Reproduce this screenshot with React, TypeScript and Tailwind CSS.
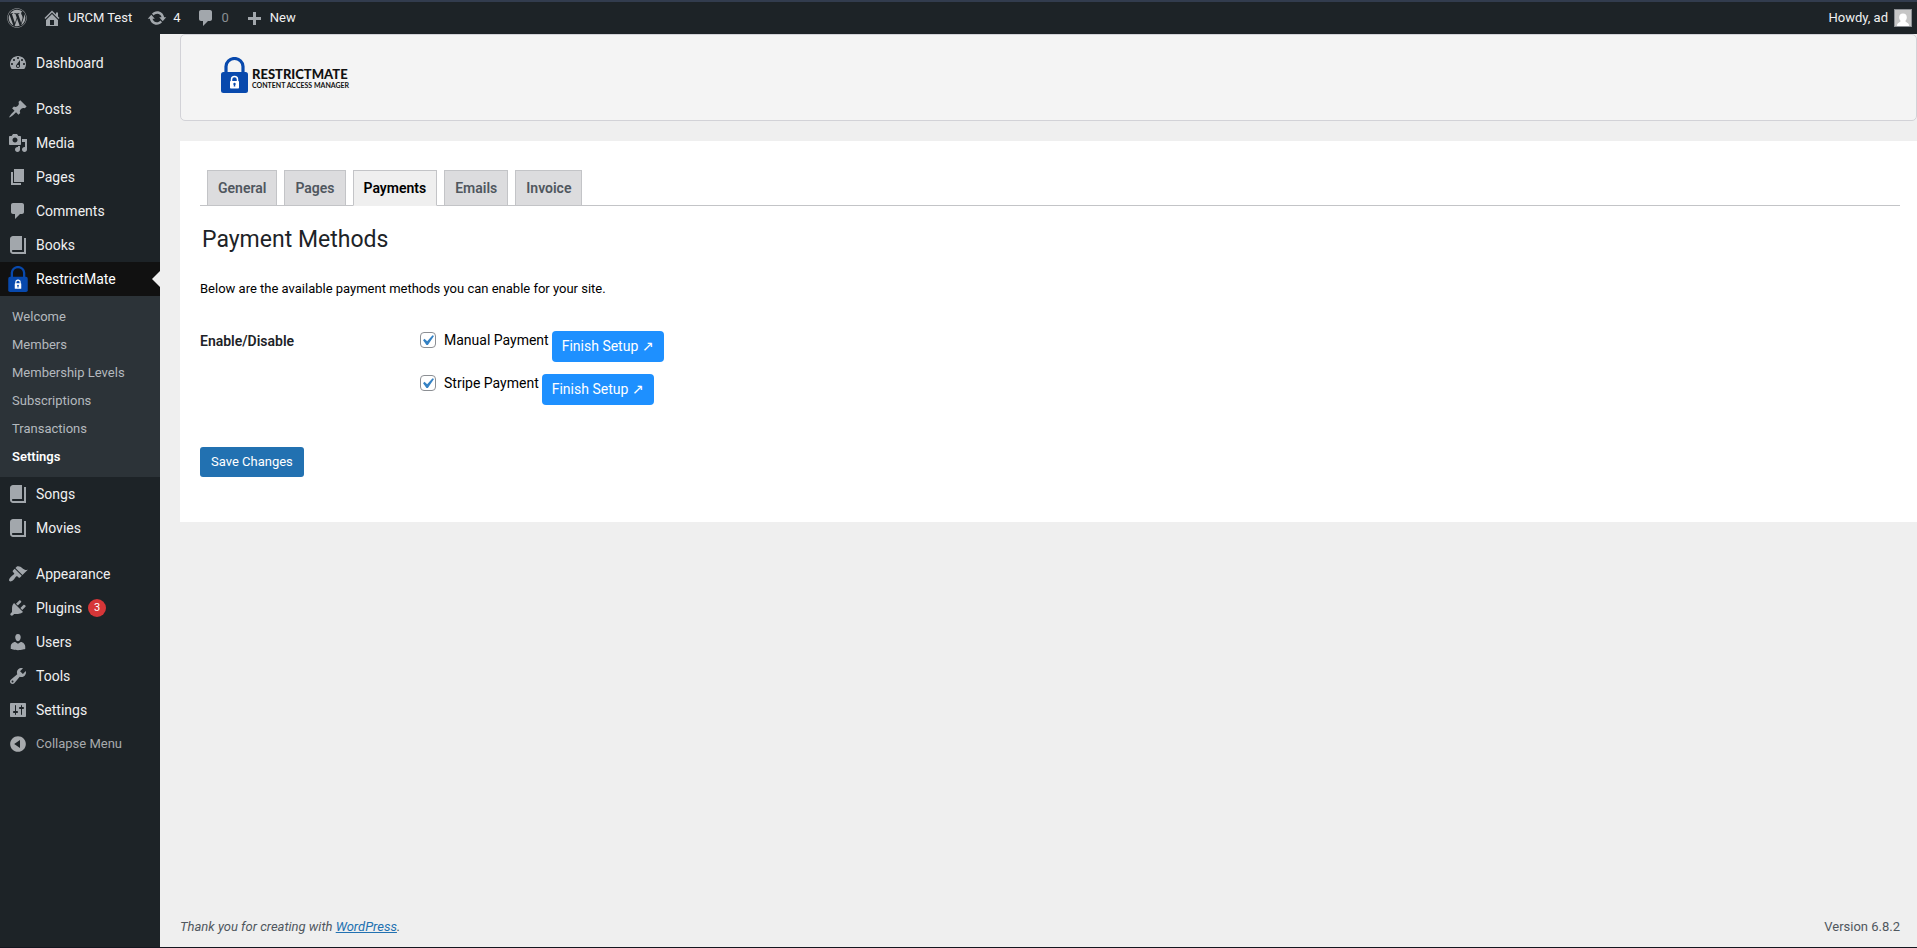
import React from 'react';
import { FaWordpress } from 'react-icons/fa6';

const paths = {
  dashboard:
    'M3.76 16h12.48c1.1-1.37 1.76-3.11 1.76-5 0-4.42-3.58-8-8-8s-8 3.58-8 8c0 1.89.66 3.63 1.76 5zM10 4c.55 0 1 .45 1 1s-.45 1-1 1-1-.45-1-1 .45-1 1-1zM6 6c.55 0 1 .45 1 1s-.45 1-1 1-1-.45-1-1 .45-1 1-1zm8 0c.55 0 1 .45 1 1s-.45 1-1 1-1-.45-1-1 .45-1 1-1zm-5.37 5.55L12 7v6c0 1.1-.9 2-2 2s-2-.9-2-2c0-.57.24-1.08.63-1.45zM4 10c.55 0 1 .45 1 1s-.45 1-1 1-1-.45-1-1 .45-1 1-1zm12 0c.55 0 1 .45 1 1s-.45 1-1 1-1-.45-1-1 .45-1 1-1zm-5 3c0-.55-.45-1-1-1s-1 .45-1 1 .45 1 1 1 1-.45 1-1z',
  post: 'M10.44 3.02l1.82-1.82 6.36 6.35-1.83 1.82c-1.05-.68-2.48-.57-3.41.36l-.75.75c-.92.93-1.04 2.35-.35 3.41l-1.83 1.82-2.41-2.41-2.8 2.79c-.42.42-3.38 2.71-3.8 2.29s1.86-3.39 2.28-3.81l2.79-2.79L4.1 9.36l1.83-1.82c1.05.69 2.48.57 3.4-.36l.75-.75c.93-.92 1.05-2.35.36-3.41z',
  media:
    'M13 11V4c0-.55-.45-1-1-1h-1.67L9 1H5L3.67 3H2c-.55 0-1 .45-1 1v7c0 .55.45 1 1 1h10c.55 0 1-.45 1-1zM7 4.5c1.38 0 2.5 1.12 2.5 2.5S8.38 9.5 7 9.5 4.5 8.38 4.5 7 5.62 4.5 7 4.5zM14 6h5v10.5c0 1.38-1.12 2.5-2.5 2.5S14 17.88 14 16.5s1.12-2.5 2.5-2.5c.17 0 .34.02.5.05V9h-3V6zm-4 8.05V13h2v3.5c0 1.38-1.12 2.5-2.5 2.5S7 17.88 7 16.5 8.12 14 9.5 14c.17 0 .34.02.5.05z',
  page: 'M6 15V2h10v13H6zm-1 1h8v2H3V5h2v11z',
  comments: 'M5 2h9c1.1 0 2 .9 2 2v7c0 1.1-.9 2-2 2h-2l-5 5v-5H5c-1.1 0-2-.9-2-2V4c0-1.1.9-2 2-2z',
  book: 'M16 3h2v16H5c-1.66 0-3-1.34-3-3V4c0-1.66 1.34-3 3-3h9v14H5c-.55 0-1 .45-1 1s.45 1 1 1h11V3z',
  appearance:
    'M14.48 11.06L7.41 3.99l1.5-1.5c.5-.56 2.3-.47 3.51.32 1.21.8 1.43 1.28 2.91 2.1 1.18.64 2.45 1.26 4.45.85zm-.71.71L6.7 4.7 4.93 6.47c-.39.39-.39 1.02 0 1.41l1.06 1.06c.39.39.39 1.03 0 1.42-.6.6-1.43 1.11-2.21 1.69-.35.26-.7.53-1.01.84C1.43 14.23.4 16.08 1.4 17.07c.99 1 2.84-.03 4.18-1.36.31-.31.58-.66.85-1.02.57-.78 1.08-1.61 1.69-2.21.39-.39 1.02-.39 1.41 0l1.06 1.06c.39.39 1.02.39 1.41 0z',
  plugins:
    'M13.11 4.36L9.87 7.6 8 5.73l3.24-3.24c.35-.34 1.05-.2 1.56.32.52.51.66 1.21.31 1.55zm-8 1.77l.91-1.12 9.01 9.01-1.19.84c-.71.71-2.63 1.16-3.82 1.16H6.14L4.9 17.26c-.59.59-1.54.59-2.12 0-.59-.58-.59-1.53 0-2.12l1.24-1.24v-3.88c0-1.13.4-3.19 1.09-3.89zm7.26 3.97l3.24-3.24c.34-.35 1.04-.21 1.55.31.52.51.66 1.21.31 1.55l-3.24 3.25z',
  users:
    'M10 9.25c-2.27 0-2.73-3.44-2.73-3.44C7 4.02 7.82 2 9.97 2c2.16 0 2.98 2.02 2.71 3.81 0 0-.41 3.44-2.68 3.44zm0 2.57L12.72 10c2.39 0 4.52 2.33 4.52 4.53v2.49s-3.65 1.13-7.24 1.13c-3.65 0-7.24-1.13-7.24-1.13v-2.49c0-2.25 1.94-4.48 4.47-4.48z',
  tools:
    'M16.68 9.77c-1.34 1.34-3.3 1.67-4.95.99l-5.41 6.52c-.99.99-2.59.99-3.58 0s-.99-2.59 0-3.57l6.52-5.42c-.68-1.65-.35-3.61.99-4.95 1.28-1.28 3.12-1.62 4.72-1.06l-2.89 2.89 2.82 2.82 2.86-2.87c.53 1.58.18 3.39-1.08 4.65zM3.81 16.21c.4.39 1.04.39 1.43 0 .4-.4.4-1.04 0-1.43-.39-.4-1.03-.4-1.43 0-.39.39-.39 1.03 0 1.43z',
  settings:
    'M18 16V4c0-.55-.45-1-1-1H3c-.55 0-1 .45-1 1v12c0 .55.45 1 1 1h14c.55 0 1-.45 1-1zM8 11h1c.55 0 1 .45 1 1s-.45 1-1 1H8v1.5c0 .28-.22.5-.5.5s-.5-.22-.5-.5V13H6c-.55 0-1-.45-1-1s.45-1 1-1h1V5.5c0-.28.22-.5.5-.5s.5.22.5.5V11zm5-2h-1c-.55 0-1-.45-1-1s.45-1 1-1h1V5.5c0-.28.22-.5.5-.5s.5.22.5.5V7h1c.55 0 1 .45 1 1s-.45 1-1 1h-1v5.5c0 .28-.22.5-.5.5s-.5-.22-.5-.5V9z',
  collapse:
    'M10 2.16c4.33 0 7.84 3.51 7.84 7.84s-3.51 7.84-7.84 7.84S2.16 14.33 2.16 10 5.71 2.16 10 2.16zm2 11.72V6.12L6.18 9.97z',
  home: 'M16 8.5l1.53 1.53-1.06 1.06L10 4.6l-6.47 6.49-1.06-1.06L10 2.5l4 4v-2h2v4zm-6-2.46l6 5.99V18H4v-5.97zM12 17v-5H8v5h4z',
  update:
    'M10.2 3.28c3.53 0 6.43 2.61 6.92 6h2.08l-3.5 4-3.5-4h2.32c-.45-1.97-2.21-3.45-4.32-3.45-1.45 0-2.73.71-3.54 1.78L4.95 5.66C6.23 4.2 8.11 3.28 10.2 3.28zm-.4 13.44c-3.52 0-6.43-2.61-6.92-6H.8l3.5-4c1.17 1.33 2.33 2.67 3.5 4H5.48c.45 1.97 2.21 3.45 4.32 3.45 1.45 0 2.73-.71 3.54-1.78l1.71 1.95c-1.28 1.46-3.15 2.38-5.25 2.38z',
  plus: 'M17 9v3h-5v5H9v-5H4V9h5V4h3v5z',
};

type IconName = keyof typeof paths;

function Icon({ name, className = 'size-5' }: { name: IconName; className?: string }) {
  return (
    <svg viewBox="0 0 20 20" fill="currentColor" fillRule="evenodd" aria-hidden="true" className={`shrink-0 ${className}`}>
      <path d={paths[name]} />
    </svg>
  );
}

function Padlock({ className }: { className: string }) {
  return (
    <svg viewBox="0 0 27 36" aria-hidden="true" className={`shrink-0 ${className}`}>
      <path d="M5 17V9.500a8.500 8 0 0 1 17 0V17" fill="none" stroke="#0849ad" strokeWidth="3.200" />
      <rect x="0" y="15" width="27" height="21" rx="2.500" fill="#0849ad" />
      <path d="M10.500 25v-2.500a3 3 0 0 1 6 0V25" fill="none" stroke="#fff" strokeWidth="1.500" />
      <rect x="9" y="24" width="9" height="7.500" rx="0.800" fill="#fff" />
      <circle cx="13.500" cy="27" r="1.200" fill="#0849ad" />
      <path d="M13 27h1l.3 2.600h-1.600z" fill="#0849ad" />
    </svg>
  );
}

function MenuItem({ icon, label, badge }: { icon: IconName; label: string; badge?: number }) {
  return (
    <li>
      <a href="#" className="flex h-[34px] items-center gap-2 pl-2 text-sm text-[#f0f0f1]">
        <Icon name={icon} className="size-5 text-[#a2a7ac]" />
        <span>{label}</span>
        {badge !== undefined && (
          <span className="-ml-0.5 flex size-[18px] items-center justify-center rounded-full bg-[#d63638] text-[11px] text-white">
            {badge}
          </span>
        )}
      </a>
    </li>
  );
}

const submenu = ['Welcome', 'Members', 'Membership Levels', 'Subscriptions', 'Transactions', 'Settings'];
const tabs = ['General', 'Pages', 'Payments', 'Emails', 'Invoice'];
const methods = ['Manual Payment', 'Stripe Payment'];

function AdminBar() {
  return (
    <header className="flex h-[34px] shrink-0 items-center border-t-2 border-[#323c4e] bg-[#1d2327] text-[13px] text-[#f0f0f1]">
      <a href="#" aria-label="About WordPress" className="flex pl-[7px] text-[#a7aaad]">
        <FaWordpress className="size-5" />
      </a>
      <a href="#" className="flex items-center gap-1.5 pl-[15px]">
        <Icon name="home" className="size-5 text-[#a2a7ac]" />
        URCM Test
      </a>
      <a href="#" className="flex items-center gap-1.5 pl-[15px]">
        <Icon name="update" className="size-5 text-[#a2a7ac]" />
        4
      </a>
      <a href="#" className="flex items-center gap-1.5 pl-[15px] text-[#8a8e92]">
        <Icon name="comments" className="size-5 text-[#a2a7ac]" />
        0
      </a>
      <a href="#" className="flex items-center gap-1.5 pl-[15px]">
        <Icon name="plus" className="size-5 text-[#a2a7ac]" />
        New
      </a>
      <a href="#" className="ml-auto flex items-center gap-1.5 pr-[5px]">
        Howdy, ad
        <svg viewBox="0 0 18 18" aria-hidden="true" className="size-[18px]">
          <rect width="18" height="18" fill="#8c8f94" />
          <rect x="1" y="1" width="16" height="16" fill="#c6c6c6" />
          <path
            d="M9 4.500c2.500 0 3.800 1.600 3.800 3.900 0 1.500-.7 2.700-1.500 3.500.2 1.200 2.800 1.500 3.500 3.300l.2 1.800H3l.2-1.800c.7-1.800 3.300-2.100 3.500-3.300-.8-.8-1.500-2-1.500-3.500 0-2.300 1.300-3.900 3.800-3.900z"
            fill="#fff"
          />
        </svg>
      </a>
    </header>
  );
}

function Sidebar() {
  return (
    <nav aria-label="Main menu" className="w-40 shrink-0 bg-[#1d2327] pt-3">
      <ul>
        <MenuItem icon="dashboard" label="Dashboard" />
      </ul>
      <ul className="mt-3">
        <MenuItem icon="post" label="Posts" />
        <MenuItem icon="media" label="Media" />
        <MenuItem icon="page" label="Pages" />
        <MenuItem icon="comments" label="Comments" />
        <MenuItem icon="book" label="Books" />
        <li>
          <a href="#" className="relative flex h-[34px] items-center gap-2 bg-[#111] pl-2 text-sm text-white">
            <Padlock className="h-[26px] w-5" />
            RestrictMate
            <span className="absolute top-[9px] right-0 border-y-8 border-r-8 border-y-transparent border-r-[#efefef]" />
          </a>
          <ul className="bg-[#2c3338] pt-[7px] pb-1.5 text-[13px] text-[#b4b9be]">
            {submenu.map((label) => (
              <li key={label}>
                <a
                  href="#"
                  className={`flex h-7 items-center px-3 ${label === 'Settings' ? 'font-semibold text-white' : ''}`}
                >
                  {label}
                </a>
              </li>
            ))}
          </ul>
        </li>
        <MenuItem icon="book" label="Songs" />
        <MenuItem icon="book" label="Movies" />
      </ul>
      <ul className="mt-3">
        <MenuItem icon="appearance" label="Appearance" />
        <MenuItem icon="plugins" label="Plugins" badge={3} />
        <MenuItem icon="users" label="Users" />
        <MenuItem icon="tools" label="Tools" />
        <MenuItem icon="settings" label="Settings" />
      </ul>
      <button type="button" className="flex h-[34px] w-full items-center gap-2 pl-2 text-[13px] text-[#a7aaad]">
        <Icon name="collapse" />
        Collapse Menu
      </button>
    </nav>
  );
}

function PaymentSettings() {
  return (
    <section className="mt-5 bg-white px-5 pt-[29px] pb-[45px]">
      <div className="-mr-[3px] flex gap-[7px] border-b border-[#c3c4c7] pl-[7px]">
        {tabs.map((label) => (
          <a
            key={label}
            href="#"
            className={`-mb-px border border-[#c3c4c7] px-2.5 py-[5px] text-sm leading-6 font-semibold ${
              label === 'Payments' ? 'border-b-[#efefef] bg-[#efefef] text-black' : 'bg-[#dcdcde] text-[#50575e]'
            }`}
          >
            {label}
          </a>
        ))}
      </div>
      <form>
        <h1 className="mt-4 px-0.5 text-[23px] leading-9 text-[#1d2327]">Payment Methods</h1>
        <p className="mt-[21px] text-[13px] leading-5 text-black">
          Below are the available payment methods you can enable for your site.
        </p>
        <fieldset className="mt-8 flex">
          <legend className="float-left w-[220px] text-sm leading-5 font-semibold text-[#1d2327]">Enable/Disable</legend>
          <div className="flex flex-col gap-3">
            {methods.map((label) => (
              <div key={label} className="flex items-start gap-[3px]">
                <label className="flex items-center gap-2 text-sm leading-[18px] text-black">
                  <span className="relative flex size-4">
                    <input
                      type="checkbox"
                      defaultChecked
                      className="peer size-4 appearance-none rounded border border-[#8c8f94] bg-white"
                    />
                    <svg
                      viewBox="0 0 20 20"
                      aria-hidden="true"
                      className="pointer-events-none absolute -top-0.5 -left-[3px] hidden size-[21px] peer-checked:block"
                    >
                      <path
                        d="M14.83 4.89l1.34.94-5.81 8.38H9.02L5.78 9.67l1.34-1.25 2.57 2.4z"
                        fill="#3582c4"
                      />
                    </svg>
                  </span>
                  {label}
                </label>
                <a href="#" className="rounded bg-[#1e90ff] px-2.5 pt-[5px] pb-1.5 text-sm leading-5 text-white">
                  Finish Setup ↗
                </a>
              </div>
            ))}
          </div>
        </fieldset>
        <button
          type="button"
          className="mt-[42px] block h-[30px] rounded-[3px] bg-[#2271b1] px-[11px] text-[13px] text-white"
        >
          Save Changes
        </button>
      </form>
    </section>
  );
}

export default function App() {
  return (
    <div className="flex min-h-screen flex-col border-b border-[#14161f] bg-[#efefef] font-[Roboto,sans-serif]">
      <AdminBar />
      <div className="flex grow">
        <Sidebar />
        <main className="flex min-w-0 grow flex-col pl-5">
          <div className="flex h-[87px] shrink-0 items-center rounded-[5px] border border-[#d2d2d7] bg-[#f4f4f4] pb-1.5 pl-10">
            <a href="#" className="flex items-center gap-1" aria-label="RestrictMate">
              <Padlock className="h-9 w-[27px]" />
              <span className="flex flex-col pt-2 font-[Lato,sans-serif] text-[#111]">
                <span className="text-[13px] leading-[13px] font-black">RESTRICTMATE</span>
                <span className="text-[7px] leading-[9px] font-bold">CONTENT ACCESS MANAGER</span>
              </span>
            </a>
          </div>
          <PaymentSettings />
          <footer className="mt-auto flex justify-between pr-[17px] pb-2.5 text-[13px] leading-5 text-[#50575e]">
            <p className="italic">
              Thank you for creating with{' '}
              <a href="#" className="text-[#2271b1] underline">
                WordPress
              </a>
              .
            </p>
            <p>Version 6.8.2</p>
          </footer>
        </main>
      </div>
    </div>
  );
}
